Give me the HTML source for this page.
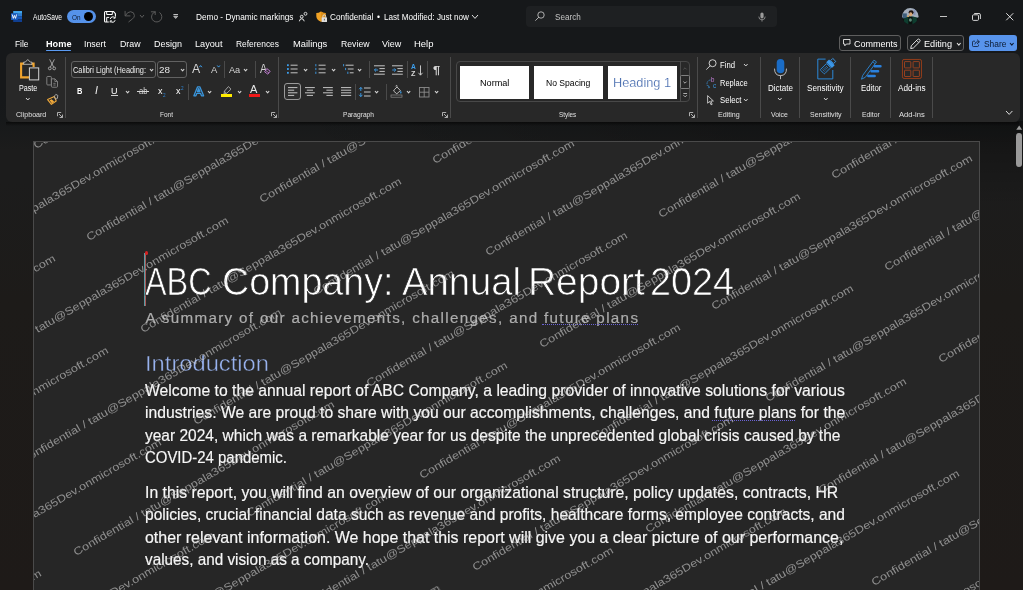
<!DOCTYPE html>
<html lang="en"><head><meta charset="utf-8"><title>Demo - Dynamic markings - Word</title>
<style>
html,body{margin:0;padding:0;background:#16181a;}
body{width:1023px;height:590px;position:relative;overflow:hidden;font-family:"Liberation Sans",sans-serif;}
#root{position:absolute;left:0;top:0;width:1023px;height:590px;overflow:hidden;will-change:transform;}
.a{position:absolute;box-sizing:border-box;}
.t{position:absolute;white-space:pre;line-height:1;transform-origin:0 0;font-family:"Liberation Sans",sans-serif;}
.bl{display:inline-block;width:0;height:0}
.wm{position:absolute;white-space:pre;line-height:1;transform-origin:0 100%;font-family:"Liberation Sans",sans-serif;}
svg{overflow:visible}
</style></head>
<body>
<div id="root">
<div class="a" style="left:0px;top:0px;width:1023px;height:125px;background:#16181a;"></div>
<div class="a" style="left:0px;top:100px;width:1023px;height:490px;background:linear-gradient(#16181a 0px,#17191a 21px,#1c1c1c 50px,#1c1c1c 80px,#1d1b19 200px,#1e1a18 490px);"></div>
<div class="a" style="left:0px;top:121px;width:1023px;height:90px;background:radial-gradient(ellipse 750px 85px at 100% 0,rgba(0,0,0,0.32),rgba(0,0,0,0));"></div>
<div class="a" style="left:6px;top:121.5px;width:1013px;height:4px;background:linear-gradient(rgba(8,8,8,0.85),rgba(8,8,8,0));"></div>
<div class="a" style="left:6px;top:53px;width:1013.5px;height:68.5px;background:#282828;border-radius:6px;"></div>
<svg class="a" style="left:11px;top:11px;" width="11" height="11" viewBox="0 0 11 11">
<rect x="2.2" y="0" width="8.8" height="2.8" fill="#41a5ee"/>
<rect x="2.2" y="2.8" width="8.8" height="2.7" fill="#2b7cd3"/>
<rect x="2.2" y="5.5" width="8.8" height="2.7" fill="#185abd"/>
<rect x="2.2" y="8.2" width="8.8" height="2.8" fill="#103f91"/>
<rect x="0" y="2.2" width="6.8" height="6.8" rx="0.6" fill="#185abd"/>
<path d="M1.3 3.8 L2.3 7.4 L3.4 4.4 L4.5 7.4 L5.5 3.8" fill="none" stroke="#fff" stroke-width="0.9" stroke-linejoin="round" stroke-linecap="round"/>
</svg>
<span class="t" id="t0" style="left:33px;top:14.01px;font-size:8.2px;color:#ffffff;transform:scaleX(0.8165);">AutoSave</span>
<div class="a" style="left:67px;top:10px;width:29px;height:13px;background:#5592ea;border-radius:6.5px;"></div>
<span class="t" id="t1" style="left:71.5px;top:14.01px;font-size:7.8px;color:#0c1a30;transform:scaleX(0.8168);">On</span>
<div class="a" style="left:84px;top:12px;width:9px;height:9px;background:#000;border-radius:4.5px;"></div>
<svg class="a" style="left:104px;top:10.8px;" width="12" height="11.5" viewBox="0 0 12 11.5">
<path d="M11.4 5.4 V2.7 L9.5 0.55 H1.6 Q0.55 0.55 0.55 1.6 V9.9 Q0.55 10.95 1.6 10.95 H4.8" fill="none" stroke="#fff" stroke-width="1.1"/>
<path d="M2.7 0.6 V3.5 H8.3 V0.6" fill="none" stroke="#fff" stroke-width="1"/>
<path d="M2.7 10.9 V6.4 H5.2" fill="none" stroke="#fff" stroke-width="1"/>
<path d="M6.3 8 A2.5 2.5 0 0 1 10.8 6.9 M11.1 9.2 A2.5 2.5 0 0 1 6.6 10.2" fill="none" stroke="#fff" stroke-width="1"/>
<path d="M11.2 5.4 V7.2 H9.4 M6.2 11.6 V9.9 H8" fill="none" stroke="#fff" stroke-width="0.9"/>
</svg>
<svg class="a" style="left:124px;top:11px;" width="11" height="11" viewBox="0 0 11 11"><path d="M1.1 0.3 V4.9 H6 M1.3 4.7 Q3.4 0.6 6.6 0.7 Q10.4 1 10.4 4.6 Q10.4 6.4 8.6 7.8 L4.8 10.8" fill="none" stroke="#5a5a5a" stroke-width="1" stroke-linecap="round" stroke-linejoin="round"/></svg>
<svg class="a" style="left:138.5px;top:14.3px;" width="6" height="4.4" viewBox="0 0 6 4.4"><path d="M1 1 L3.0 3.4 L5 1" fill="none" stroke="#5c5c5c" stroke-width="1" stroke-linejoin="round"/></svg>
<svg class="a" style="left:151px;top:11px;" width="11" height="11" viewBox="0 0 11 11"><path d="M0.3 0.8 H4.2 V3.6 M4.2 0.8 A5.2 5.2 0 1 0 8.8 1.6" fill="none" stroke="#5a5a5a" stroke-width="1" stroke-linecap="round" stroke-linejoin="round"/></svg>
<svg class="a" style="left:173px;top:14.2px;" width="5.4" height="5" viewBox="0 0 5.4 5"><path d="M0.4 0.6 H5" stroke="#d4d4d4" stroke-width="1"/><path d="M0.7 2.3 L2.7 4.5 L4.7 2.3 Z" fill="#9a9a9a" stroke="#d4d4d4" stroke-width="0.7" stroke-linejoin="round"/></svg>
<span class="t" id="t2" style="left:196px;top:13.00px;font-size:8.6px;color:#ffffff;transform:scaleX(0.9630);">Demo - Dynamic markings</span>
<svg class="a" style="left:299px;top:12px;" width="8" height="9.5" viewBox="0 0 8 9.5"><circle cx="2.7" cy="4.7" r="1.4" fill="none" stroke="#e8e8e8" stroke-width="1"/>
<path d="M0.4 9.3 Q0.5 6.8 2.7 6.8 Q4.9 6.8 5.2 9.3" fill="none" stroke="#e8e8e8" stroke-width="1"/><circle cx="6.5" cy="1.8" r="1.45" fill="none" stroke="#e8e8e8" stroke-width="0.9"/></svg>
<svg class="a" style="left:316px;top:11px;" width="12" height="12" viewBox="0 0 12 12"><path d="M4.9 0.4 Q7.2 1.9 9.6 2 V5.2 Q9.4 9 4.9 10.8 Q0.5 9 0.3 5.2 V2 Q2.6 1.9 4.9 0.4Z" fill="#f0a225"/>
<path d="M4.9 0.4 Q7.2 1.9 9.6 2 V5.2 Q9.4 9 4.9 10.8Z" fill="#dc8e18"/>
<rect x="5.6" y="6.2" width="5.4" height="4.8" rx="0.5" fill="#dedede"/>
<path d="M6.9 6.2 V5.2 A1.4 1.4 0 0 1 9.7 5.2 V6.2" fill="none" stroke="#dedede" stroke-width="0.9"/><rect x="7.9" y="7.8" width="0.9" height="1.6" fill="#555"/></svg>
<span class="t" id="t3" style="left:329.7px;top:13.00px;font-size:8.6px;color:#ffffff;transform:scaleX(0.9539);">Confidential</span>
<span class="t" id="t4" style="left:376.7px;top:13.00px;font-size:8.6px;color:#ffffff;transform:scaleX(0.9948);">•</span>
<span class="t" id="t5" style="left:383.5px;top:13.00px;font-size:8.6px;color:#ffffff;transform:scaleX(0.9464);">Last Modified: Just now</span>
<svg class="a" style="left:471px;top:14px;" width="8" height="5.4" viewBox="0 0 8 5.4"><path d="M1 1 L4.0 4.4 L7 1" fill="none" stroke="#e0e0e0" stroke-width="1" stroke-linejoin="round"/></svg>
<div class="a" style="left:526px;top:6px;width:251px;height:21px;background:#1e2022;border-radius:4px;"></div>
<svg class="a" style="left:535px;top:11px;" width="10" height="10" viewBox="0 0 10 10"><circle cx="6" cy="4" r="3.2" fill="none" stroke="#bdbdbd" stroke-width="0.9"/><path d="M3.7 6.3 L0.6 9.4" stroke="#bdbdbd" stroke-width="0.9" stroke-linecap="round"/></svg>
<span class="t" id="t6" style="left:554.5px;top:13.00px;font-size:8.6px;color:#c4c4c4;transform:scaleX(0.9473);">Search</span>
<svg class="a" style="left:758px;top:12px;" width="8" height="10" viewBox="0 0 8 10"><rect x="2.4" y="0.4" width="3.2" height="6" rx="1.6" fill="#9a9a9a"/><path d="M0.8 4.6 Q0.8 7.8 4 7.8 Q7.2 7.8 7.2 4.6 M4 7.8 V9.6" fill="none" stroke="#9a9a9a" stroke-width="0.8"/></svg>
<svg class="a" style="left:902px;top:8px;" width="17" height="17" viewBox="0 0 17 17"><defs><clipPath id="av"><circle cx="8.3" cy="8.2" r="8.2"/></clipPath></defs>
<g clip-path="url(#av)"><rect width="17" height="17" fill="#0c1512"/>
<rect x="0" y="0" width="17" height="9.6" fill="#a3adbb"/>
<rect x="0.6" y="5.4" width="4.2" height="5" fill="#3f5f7c"/>
<rect x="11.5" y="1" width="2" height="6" fill="#8793b8"/>
<path d="M1.5 17 L2.2 10.4 L6.4 8.4 H11 L14.6 9.6 L15.4 17Z" fill="#0e3d2f"/>
<rect x="6.4" y="8.8" width="4" height="8.2" fill="#0b100e"/>
<ellipse cx="9.1" cy="4.4" rx="2.5" ry="2.1" fill="#1c120e"/>
<ellipse cx="8.7" cy="6.3" rx="1.7" ry="2" fill="#d6a677"/>
<rect x="5.4" y="7.4" width="1.6" height="1.6" fill="#d8a25a"/>
<ellipse cx="8.4" cy="12" rx="1.5" ry="1.7" fill="#5d8a7a"/></g></svg>
<div class="a" style="left:940.3px;top:15.5px;width:7px;height:1px;background:#c4c4c4;"></div>
<svg class="a" style="left:972px;top:12.5px;" width="9" height="8" viewBox="0 0 9 8"><rect x="0.5" y="1.8" width="6" height="5.6" rx="1" fill="none" stroke="#e6e6e6" stroke-width="0.9"/><path d="M2.2 0.5 H7 Q8.4 0.5 8.4 1.9 V6" fill="none" stroke="#e6e6e6" stroke-width="0.9"/></svg>
<svg class="a" style="left:1005.5px;top:13px;" width="8" height="8" viewBox="0 0 8 8"><path d="M0.5 0.5 L7 7 M7 0.5 L0.5 7" stroke="#f0f0f0" stroke-width="0.9" stroke-linecap="round"/></svg>
<span class="t" id="t7" style="left:14.5px;top:40.00px;font-size:9.3px;color:#ffffff;transform:scaleX(0.9009);">File</span>
<span class="t" id="t8" style="left:45.5px;top:40.00px;font-size:9.3px;color:#ffffff;font-weight:700;transform:scaleX(0.9867);">Home</span>
<div class="a" style="left:45.5px;top:49.6px;width:25.5px;height:1.8px;background:#5b9bf3;border-radius:1px;"></div>
<span class="t" id="t9" style="left:84px;top:40.00px;font-size:9.3px;color:#ffffff;transform:scaleX(0.9456);">Insert</span>
<span class="t" id="t10" style="left:120px;top:40.00px;font-size:9.3px;color:#ffffff;transform:scaleX(0.9446);">Draw</span>
<span class="t" id="t11" style="left:153.5px;top:40.00px;font-size:9.3px;color:#ffffff;transform:scaleX(0.9671);">Design</span>
<span class="t" id="t12" style="left:194.5px;top:40.00px;font-size:9.3px;color:#ffffff;transform:scaleX(0.9849);">Layout</span>
<span class="t" id="t13" style="left:236px;top:40.00px;font-size:9.3px;color:#ffffff;transform:scaleX(0.9044);">References</span>
<span class="t" id="t14" style="left:293px;top:40.00px;font-size:9.3px;color:#ffffff;transform:scaleX(1.0056);">Mailings</span>
<span class="t" id="t15" style="left:340.5px;top:40.00px;font-size:9.3px;color:#ffffff;transform:scaleX(0.9349);">Review</span>
<span class="t" id="t16" style="left:381.7px;top:40.00px;font-size:9.3px;color:#ffffff;transform:scaleX(0.9658);">View</span>
<span class="t" id="t17" style="left:413.5px;top:40.00px;font-size:9.3px;color:#ffffff;transform:scaleX(1.0196);">Help</span>
<div class="a" style="left:839px;top:35.2px;width:62px;height:15.8px;background:#1d1f21;border:1px solid #5e5e5e;border-radius:3px;"></div>
<svg class="a" style="left:842.9px;top:39.3px;" width="7.5" height="7.5" viewBox="0 0 7.5 7.5"><path d="M0.5 0.5 H7 V5 H3.4 L1.8 6.8 V5 H0.5Z" fill="none" stroke="#fff" stroke-width="0.8" stroke-linejoin="round"/></svg>
<span class="t" id="t18" style="left:853.6px;top:40.01px;font-size:9.0px;color:#ffffff;transform:scaleX(1.0019);">Comments</span>
<div class="a" style="left:907px;top:35.2px;width:56.8px;height:15.8px;background:#1d1f21;border:1px solid #5e5e5e;border-radius:3px;"></div>
<svg class="a" style="left:909.8px;top:37.6px;" width="11" height="11.4" viewBox="0 0 11 11"><path d="M7.6 1.2 Q8.6 0.4 9.6 1.4 Q10.6 2.4 9.8 3.4 L3.4 9.8 L0.7 10.4 L1.3 7.6 Z M6.6 2.2 L8.8 4.4" fill="none" stroke="#fff" stroke-width="0.85" stroke-linejoin="round"/></svg>
<span class="t" id="t19" style="left:924.2px;top:40.01px;font-size:9.0px;color:#ffffff;transform:scaleX(1.0170);">Editing</span>
<svg class="a" style="left:955.8px;top:41.5px;" width="5.6" height="4.1" viewBox="0 0 5.6 4.1"><path d="M1 1 L2.8 3.1 L4.6 1" fill="none" stroke="#e0e0e0" stroke-width="1.1" stroke-linejoin="round"/></svg>
<div class="a" style="left:969px;top:35.2px;width:48px;height:15.8px;background:#5894ec;border-radius:3px;"></div>
<svg class="a" style="left:972.2px;top:39.2px;" width="8" height="8" viewBox="0 0 8 8"><path d="M3 2.2 H1.4 Q0.5 2.2 0.5 3.1 V6.6 Q0.5 7.5 1.4 7.5 H5.6 Q6.5 7.5 6.5 6.6 V5.6" fill="none" stroke="#0c1a30" stroke-width="0.8"/><path d="M5 0.6 L7.4 2.8 L5 5 M7.2 2.8 H5.4 Q3.2 2.8 2.8 5.4" fill="none" stroke="#0c1a30" stroke-width="0.8" stroke-linejoin="round"/></svg>
<span class="t" id="t20" style="left:983.6px;top:40.01px;font-size:9.0px;color:#0c1a30;transform:scaleX(0.9321);">Share</span>
<svg class="a" style="left:1009.2px;top:41.5px;" width="5.6" height="4.1" viewBox="0 0 5.6 4.1"><path d="M1 1 L2.8 3.1 L4.6 1" fill="none" stroke="#0c1a30" stroke-width="1.1" stroke-linejoin="round"/></svg>
<svg class="a" style="left:20px;top:59px;" width="19.5" height="21.5" viewBox="0 0 19.5 21.5">
<path d="M4 4.6 H1.1 V18.4 H9 M11 4.6 H13.6 V8" fill="none" stroke="#f0a42e" stroke-width="2.1"/>
<path d="M3.7 5.3 V3.1 H5.3 L7.8 0.5 L10.3 3.1 H11.9 V5.3 Z" fill="#282828" stroke="#cfcfcf" stroke-width="0.8" stroke-linejoin="round"/>
<rect x="9.4" y="8.9" width="9.3" height="12" fill="#2a2a2a" stroke="#d4d4d4" stroke-width="1"/>
</svg>
<span class="t" id="t21" style="left:18.8px;top:84.02px;font-size:8.3px;color:#ffffff;transform:scaleX(0.8624);">Paste</span>
<svg class="a" style="left:25px;top:96.8px;" width="5.6" height="4" viewBox="0 0 5.6 4"><path d="M1 1 L2.8 3 L4.6 1" fill="none" stroke="#d6d6d6" stroke-width="1" stroke-linejoin="round"/></svg>
<svg class="a" style="left:48px;top:59px;" width="8" height="11.5" viewBox="0 0 8 11.5"><path d="M1.6 0.3 L5.6 8 M6.4 0.3 L2.4 8" stroke="#bdbdbd" stroke-width="0.8" fill="none"/>
<circle cx="1.8" cy="9.4" r="1.4" fill="none" stroke="#bdbdbd" stroke-width="0.8"/><circle cx="6.2" cy="9.4" r="1.4" fill="none" stroke="#bdbdbd" stroke-width="0.8"/></svg>
<svg class="a" style="left:46px;top:76px;" width="12.5" height="11.8" viewBox="0 0 12.5 12.5"><path d="M0.5 8.6 V1.4 Q0.5 0.5 1.4 0.5 H4.4 Q5.3 0.5 5.3 1.4 V8.6 Q5.3 9.5 4.4 9.5 H1.4 Q0.5 9.5 0.5 8.6Z" fill="none" stroke="#8f8f8f" stroke-width="0.9"/>
<path d="M5.4 3 H9 L11.8 5.8 V11 Q11.8 11.9 10.9 11.9 H6.3 Q5.4 11.9 5.4 11 Z" fill="#282828" stroke="#8f8f8f" stroke-width="0.9"/>
<path d="M9 3 V5.8 H11.8 M7.4 7.8 H9.8 M7.4 9.6 H9.8" fill="none" stroke="#8f8f8f" stroke-width="0.8"/></svg>
<svg class="a" style="left:46.5px;top:94px;" width="12" height="11" viewBox="0 0 12 11"><path d="M0.6 5.6 L7.4 2.6 L9.2 7 L4.4 10.4 Z" fill="none" stroke="#f0a93a" stroke-width="1.1" stroke-linejoin="round"/>
<path d="M2.6 6.2 L5 9.4 L7.2 7.6 L4.6 5.2Z" fill="#f0a93a"/>
<path d="M7.2 2.4 L8.8 0.4 L10.8 1.4 L10.4 4.4 L8.6 5.2Z" fill="none" stroke="#bdbdbd" stroke-width="0.8" stroke-linejoin="round"/></svg>
<span class="t" id="t22" style="left:16px;top:111.00px;font-size:7.9px;color:#e0e0e0;transform:scaleX(0.8969);">Clipboard</span>
<svg class="a" style="left:57px;top:112px;" width="6" height="6" viewBox="0 0 6 6"><path d="M0.5 4.2 V0.5 H4.2" fill="none" stroke="#bdbdbd" stroke-width="0.9"/><path d="M2 2 L5.4 5.4 M5.5 2.6 V5.5 H2.6" fill="none" stroke="#bdbdbd" stroke-width="0.9"/></svg>
<div class="a" style="left:65px;top:57px;width:1px;height:61px;background:#4a4a4a;"></div>
<div class="a" style="left:71px;top:61px;width:84.5px;height:17px;background:#282828;border:1px solid #626262;border-radius:3px;"></div>
<span class="t" id="t23" style="left:73px;top:66.01px;font-size:8.3px;color:#ececec;transform:scaleX(0.8892);">Calibri Light (Heading:</span>
<svg class="a" style="left:148.7px;top:67.6px;" width="5.2" height="3.9" viewBox="0 0 5.2 3.9"><path d="M1 1 L2.6 2.9 L4.2 1" fill="none" stroke="#d6d6d6" stroke-width="1.1" stroke-linejoin="round"/></svg>
<div class="a" style="left:157px;top:61px;width:29.5px;height:17px;background:#282828;border:1px solid #626262;border-radius:3px;"></div>
<span class="t" id="t24" style="left:159px;top:66.01px;font-size:8.3px;color:#e4e4e4;transform:scaleX(1.1912);">28</span>
<svg class="a" style="left:179.9px;top:67.6px;" width="5.2" height="3.9" viewBox="0 0 5.2 3.9"><path d="M1 1 L2.6 2.9 L4.2 1" fill="none" stroke="#d6d6d6" stroke-width="1.1" stroke-linejoin="round"/></svg>
<span class="t" id="t25" style="left:191.8px;top:63.00px;font-size:12.4px;color:#d4d4d4;transform:scaleX(0.9921);">A</span>
<svg class="a" style="left:199.1px;top:64.6px;" width="3.2" height="2.6" viewBox="0 0 3.2 2.6"><path d="M0.3 2.2 L1.6 0.6 L2.9 2.2" fill="none" stroke="#3da0ee" stroke-width="1"/></svg>
<span class="t" id="t26" style="left:210.8px;top:65.01px;font-size:9.6px;color:#d4d4d4;transform:scaleX(0.9834);">A</span>
<svg class="a" style="left:217px;top:64.8px;" width="3.2" height="2.6" viewBox="0 0 3.2 2.6"><path d="M0.3 0.5 L1.6 2.1 L2.9 0.5" fill="none" stroke="#3da0ee" stroke-width="1"/></svg>
<div class="a" style="left:224px;top:61px;width:1px;height:17px;background:#4a4a4a;"></div>
<span class="t" id="t27" style="left:229.2px;top:65.02px;font-size:9.8px;color:#d4d4d4;transform:scaleX(0.9346);">Aa</span>
<svg class="a" style="left:243.2px;top:67.6px;" width="5.2" height="3.9" viewBox="0 0 5.2 3.9"><path d="M1 1 L2.6 2.9 L4.2 1" fill="none" stroke="#d6d6d6" stroke-width="1.1" stroke-linejoin="round"/></svg>
<div class="a" style="left:255px;top:61px;width:1px;height:17px;background:#4a4a4a;"></div>
<span class="t" id="t28" style="left:259.6px;top:63.01px;font-size:12.8px;color:#d4d4d4;transform:scaleX(0.8190);">A</span>
<svg class="a" style="left:264.3px;top:68.4px;" width="7" height="7" viewBox="0 0 7 7"><path d="M2.8 0.6 L6.2 3.2 L3.8 6.2 L0.6 3.8Z" fill="#282828" stroke="#c47fd6" stroke-width="0.9" stroke-linejoin="round"/><path d="M1.6 2.4 L5 5" stroke="#c47fd6" stroke-width="0.8"/></svg>
<span class="t" id="t29" style="left:76.8px;top:86.01px;font-size:9.8px;color:#ffffff;font-weight:700;transform:scaleX(0.7629);">B</span>
<span class="t" id="t30" style="left:95px;top:85.01px;font-size:10.6px;color:#f0f0f0;font-style:italic;font-family:"Liberation Serif",serif;transform:scaleX(1.5577);">I</span>
<span class="t" id="t31" style="left:111px;top:87.01px;font-size:8.8px;color:#ffffff;transform:scaleX(1.0221);">U</span>
<div class="a" style="left:111px;top:95.2px;width:6.5px;height:0.8px;background:#cfcfcf;"></div>
<svg class="a" style="left:125.2px;top:90.2px;" width="5.2" height="3.9" viewBox="0 0 5.2 3.9"><path d="M1 1 L2.6 2.9 L4.2 1" fill="none" stroke="#d6d6d6" stroke-width="1.1" stroke-linejoin="round"/></svg>
<span class="t" id="t32" style="left:138.5px;top:87.01px;font-size:8.4px;color:#d6d6d6;transform:scaleX(0.9112);">ab</span>
<div class="a" style="left:137px;top:91.4px;width:11.5px;height:0.8px;background:#d6d6d6;"></div>
<span class="t" id="t33" style="left:158px;top:87.00px;font-size:9px;color:#ffffff;transform:scaleX(1.0000);">x</span>
<span class="t" id="t34" style="left:163.2px;top:94.01px;font-size:4.9px;color:#2f86d6;transform:scaleX(0.9509);">2</span>
<span class="t" id="t35" style="left:176px;top:87.00px;font-size:9px;color:#ffffff;transform:scaleX(1.0000);">x</span>
<span class="t" id="t36" style="left:181px;top:87.01px;font-size:4.9px;color:#2f86d6;transform:scaleX(0.9509);">2</span>
<div class="a" style="left:188px;top:84px;width:1px;height:15.5px;background:#4a4a4a;"></div>
<svg class="a" style="left:192.5px;top:86px;" width="11.5" height="10.5" viewBox="0 0 11.5 10.5"><path d="M0.9 9.8 L4.6 0.8 H6.8 L10.6 9.8 H8.5 L7.6 7.4 H3.8 L2.9 9.8Z M4.5 5.6 H6.9 L5.7 2.6Z" fill="none" stroke="#3a96dd" stroke-width="1.3" stroke-linejoin="round"/></svg>
<svg class="a" style="left:206.9px;top:90.2px;" width="5.2" height="3.9" viewBox="0 0 5.2 3.9"><path d="M1 1 L2.6 2.9 L4.2 1" fill="none" stroke="#d6d6d6" stroke-width="1.1" stroke-linejoin="round"/></svg>
<svg class="a" style="left:222px;top:85.5px;" width="10" height="9" viewBox="0 0 10 9"><path d="M6.4 0.6 L9 3.2 L4.6 7.4 L2.2 7.8 L2.4 5.2Z M2.4 5.2 L4.6 7.4" fill="none" stroke="#b4b4b4" stroke-width="0.85" stroke-linejoin="round"/><path d="M1.6 7.4 L0.6 8.6 H2.6Z" fill="#b4b4b4"/></svg>
<div class="a" style="left:221px;top:94.2px;width:11px;height:2.9px;background:#ffeb00;"></div>
<svg class="a" style="left:236.9px;top:90.2px;" width="5.2" height="3.9" viewBox="0 0 5.2 3.9"><path d="M1 1 L2.6 2.9 L4.2 1" fill="none" stroke="#d6d6d6" stroke-width="1.1" stroke-linejoin="round"/></svg>
<span class="t" id="t37" style="left:250.4px;top:85.01px;font-size:10.4px;color:#e8e8e8;transform:scaleX(1.0667);">A</span>
<div class="a" style="left:248.5px;top:94.2px;width:11.5px;height:2.9px;background:#f01818;"></div>
<svg class="a" style="left:265.4px;top:90.2px;" width="5.2" height="3.9" viewBox="0 0 5.2 3.9"><path d="M1 1 L2.6 2.9 L4.2 1" fill="none" stroke="#d6d6d6" stroke-width="1.1" stroke-linejoin="round"/></svg>
<span class="t" id="t38" style="left:160px;top:111.00px;font-size:7.9px;color:#e0e0e0;transform:scaleX(0.8229);">Font</span>
<svg class="a" style="left:270.5px;top:112px;" width="6" height="6" viewBox="0 0 6 6"><path d="M0.5 4.2 V0.5 H4.2" fill="none" stroke="#bdbdbd" stroke-width="0.9"/><path d="M2 2 L5.4 5.4 M5.5 2.6 V5.5 H2.6" fill="none" stroke="#bdbdbd" stroke-width="0.9"/></svg>
<div class="a" style="left:278px;top:57px;width:1px;height:61px;background:#4a4a4a;"></div>
<svg class="a" style="left:286.5px;top:64px;" width="11" height="10" viewBox="0 0 11 10"><rect x="0" y="0.29999999999999993" width="1.8" height="1.8" fill="#3da0ee"/><path d="M3.6 1.2 H10.6" stroke="#d6d6d6" stroke-width="0.9"/><rect x="0" y="4.1" width="1.8" height="1.8" fill="#3da0ee"/><path d="M3.6 5 H10.6" stroke="#d6d6d6" stroke-width="0.9"/><rect x="0" y="7.9" width="1.8" height="1.8" fill="#3da0ee"/><path d="M3.6 8.8 H10.6" stroke="#d6d6d6" stroke-width="0.9"/></svg>
<svg class="a" style="left:302.8px;top:67.6px;" width="5.2" height="3.9" viewBox="0 0 5.2 3.9"><path d="M1 1 L2.6 2.9 L4.2 1" fill="none" stroke="#d6d6d6" stroke-width="1.1" stroke-linejoin="round"/></svg>
<svg class="a" style="left:315px;top:64px;" width="11" height="10" viewBox="0 0 11 10"><rect x="0.4" y="0.09999999999999987" width="0.9" height="2.2" fill="#3da0ee"/><path d="M3.6 1.2 H10.6" stroke="#d6d6d6" stroke-width="0.9"/><rect x="0.4" y="3.9" width="0.9" height="2.2" fill="#3da0ee"/><path d="M3.6 5 H10.6" stroke="#d6d6d6" stroke-width="0.9"/><rect x="0.4" y="7.700000000000001" width="0.9" height="2.2" fill="#3da0ee"/><path d="M3.6 8.8 H10.6" stroke="#d6d6d6" stroke-width="0.9"/></svg>
<svg class="a" style="left:330.8px;top:67.6px;" width="5.2" height="3.9" viewBox="0 0 5.2 3.9"><path d="M1 1 L2.6 2.9 L4.2 1" fill="none" stroke="#d6d6d6" stroke-width="1.1" stroke-linejoin="round"/></svg>
<svg class="a" style="left:343px;top:64px;" width="11" height="10" viewBox="0 0 11 10"><rect x="0.2" y="0.1" width="0.9" height="2.2" fill="#3da0ee"/><path d="M2.6 1.2 H10.6" stroke="#d6d6d6" stroke-width="0.9"/><rect x="2.2" y="3.9" width="0.9" height="2.2" fill="#3da0ee"/><path d="M4.8 5 H10.6" stroke="#d6d6d6" stroke-width="0.9"/><rect x="4.4" y="7.7" width="0.9" height="2.2" fill="#3da0ee"/><path d="M6.8 8.8 H10.6" stroke="#d6d6d6" stroke-width="0.9"/></svg>
<svg class="a" style="left:357.4px;top:67.6px;" width="5.2" height="3.9" viewBox="0 0 5.2 3.9"><path d="M1 1 L2.6 2.9 L4.2 1" fill="none" stroke="#d6d6d6" stroke-width="1.1" stroke-linejoin="round"/></svg>
<div class="a" style="left:369px;top:61px;width:1px;height:17px;background:#4a4a4a;"></div>
<svg class="a" style="left:374px;top:64.5px;" width="11" height="10" viewBox="0 0 11 10"><path d="M0 0.8 H10.8 M5.4 3.6 H10.8 M5.4 6.4 H10.8 M0 9.2 H10.8" stroke="#d6d6d6" stroke-width="0.9"/><path d="M4 5 H0.6 M2 3.4 L0.4 5 L2 6.6" fill="none" stroke="#3da0ee" stroke-width="0.9"/></svg>
<svg class="a" style="left:391.5px;top:64.5px;" width="11" height="10" viewBox="0 0 11 10"><path d="M0 0.8 H10.8 M5.4 3.6 H10.8 M5.4 6.4 H10.8 M0 9.2 H10.8" stroke="#d6d6d6" stroke-width="0.9"/><path d="M0.2 5 H3.6 M2.2 3.4 L3.8 5 L2.2 6.6" fill="none" stroke="#3da0ee" stroke-width="0.9"/></svg>
<div class="a" style="left:407px;top:61px;width:1px;height:17px;background:#4a4a4a;"></div>
<span class="t" id="t39" style="left:411.2px;top:64.02px;font-size:6.6px;color:#3da0ee;font-weight:700;transform:scaleX(1.0072);">A</span>
<span class="t" id="t40" style="left:411.4px;top:71.01px;font-size:6.6px;color:#d6d6d6;font-weight:700;transform:scaleX(1.0915);">Z</span>
<svg class="a" style="left:417.5px;top:64.5px;" width="5" height="11" viewBox="0 0 5 11"><path d="M2.5 0.4 V10 M0.5 7.8 L2.5 10.2 L4.5 7.8" fill="none" stroke="#d6d6d6" stroke-width="0.9"/></svg>
<div class="a" style="left:427px;top:61px;width:1px;height:17px;background:#4a4a4a;"></div>
<span class="t" id="t41" style="left:433.2px;top:65.01px;font-size:11px;color:#d6d6d6;font-weight:700;transform:scaleX(1.1755);">¶</span>
<div class="a" style="left:284px;top:83px;width:17px;height:17px;background:#2e2e2e;border:1px solid #9a9a9a;border-radius:3px;"></div>
<svg class="a" style="left:288px;top:87px;" width="10" height="9" viewBox="0 0 10 9"><path d="M0 0.6 H9.4 M0 3.2 H6.2 M0 5.8 H9.4 M0 8.4 H6.2" stroke="#d6d6d6" stroke-width="0.9"/></svg>
<svg class="a" style="left:305px;top:87px;" width="10" height="9" viewBox="0 0 10 9"><path d="M0 0.6 H9.8 M1.8 3.2 H8 M0 5.8 H9.8 M1.8 8.4 H8" stroke="#d6d6d6" stroke-width="0.9"/></svg>
<svg class="a" style="left:323px;top:87px;" width="10" height="9" viewBox="0 0 10 9"><path d="M0 0.6 H9.8 M3.4 3.2 H9.8 M0 5.8 H9.8 M3.4 8.4 H9.8" stroke="#d6d6d6" stroke-width="0.9"/></svg>
<svg class="a" style="left:340.6px;top:87px;" width="10.4" height="9" viewBox="0 0 10.4 9"><path d="M0 0.6 H10.2 M0 3.2 H10.2 M0 5.8 H10.2 M0 8.4 H10.2" stroke="#d6d6d6" stroke-width="0.9"/></svg>
<div class="a" style="left:355px;top:84px;width:1px;height:15.5px;background:#4a4a4a;"></div>
<svg class="a" style="left:359px;top:86.5px;" width="12" height="10" viewBox="0 0 12 10"><path d="M5 1 H11.6 M5 5 H11.6 M5 9 H11.6" stroke="#d6d6d6" stroke-width="0.9"/><path d="M1.8 0.4 V4 M1.8 6 V9.6 M0.2 2.2 L1.8 0.4 L3.4 2.2 M0.2 7.8 L1.8 9.6 L3.4 7.8" fill="none" stroke="#3da0ee" stroke-width="0.9"/></svg>
<svg class="a" style="left:374.4px;top:90.2px;" width="5.2" height="3.9" viewBox="0 0 5.2 3.9"><path d="M1 1 L2.6 2.9 L4.2 1" fill="none" stroke="#d6d6d6" stroke-width="1.1" stroke-linejoin="round"/></svg>
<div class="a" style="left:386px;top:84px;width:1px;height:15.5px;background:#4a4a4a;"></div>
<svg class="a" style="left:391px;top:85.5px;" width="11" height="11.5" viewBox="0 0 11 11.5"><path d="M3.4 3.6 L6 1 L9.4 4.6 L5.8 7.8 L2.6 5 Z" fill="none" stroke="#d6d6d6" stroke-width="0.85" stroke-linejoin="round"/><path d="M6 1 V-0.2 Q6 -1 5 -0.4 L4.4 0.4" fill="none" stroke="#d6d6d6" stroke-width="0.7"/><path d="M9.8 4.6 Q11.4 7.2 9.8 7.8 Q8.4 7.2 9.8 4.6Z" fill="#3a96dd"/><rect x="0" y="9" width="11" height="2.2" fill="none" stroke="#8a8a8a" stroke-width="0.7"/></svg>
<svg class="a" style="left:406.4px;top:90.2px;" width="5.2" height="3.9" viewBox="0 0 5.2 3.9"><path d="M1 1 L2.6 2.9 L4.2 1" fill="none" stroke="#d6d6d6" stroke-width="1.1" stroke-linejoin="round"/></svg>
<svg class="a" style="left:418.5px;top:86.5px;" width="10.5" height="10.5" viewBox="0 0 10.5 10.5"><rect x="0.5" y="0.5" width="9.5" height="9.5" fill="none" stroke="#8c8c8c" stroke-width="0.9"/><path d="M5.2 0.5 V10 M0.5 5.2 H10" stroke="#8c8c8c" stroke-width="0.9"/></svg>
<svg class="a" style="left:434.4px;top:90.2px;" width="5.2" height="3.9" viewBox="0 0 5.2 3.9"><path d="M1 1 L2.6 2.9 L4.2 1" fill="none" stroke="#d6d6d6" stroke-width="1.1" stroke-linejoin="round"/></svg>
<span class="t" id="t42" style="left:343px;top:111.00px;font-size:7.9px;color:#e0e0e0;transform:scaleX(0.8410);">Paragraph</span>
<svg class="a" style="left:442px;top:112px;" width="6" height="6" viewBox="0 0 6 6"><path d="M0.5 4.2 V0.5 H4.2" fill="none" stroke="#bdbdbd" stroke-width="0.9"/><path d="M2 2 L5.4 5.4 M5.5 2.6 V5.5 H2.6" fill="none" stroke="#bdbdbd" stroke-width="0.9"/></svg>
<div class="a" style="left:450px;top:57px;width:1px;height:61px;background:#4a4a4a;"></div>
<div class="a" style="left:455.8px;top:61.3px;width:234.2px;height:41.2px;border:1px solid #484848;border-radius:4px;"></div>
<div class="a" style="left:460.4px;top:65.6px;width:68.8px;height:33px;background:#fff;"></div>
<div class="a" style="left:534px;top:65.6px;width:68.7px;height:33px;background:#fff;"></div>
<div class="a" style="left:607.8px;top:65.6px;width:69px;height:33px;background:#fff;"></div>
<span class="t" id="t43" style="left:480px;top:79.01px;font-size:9.0px;color:#000;transform:scaleX(1.0132);">Normal</span>
<span class="t" id="t44" style="left:546px;top:79.01px;font-size:9.0px;color:#000;transform:scaleX(0.9542);">No Spacing</span>
<span class="t" id="t45" style="left:613px;top:76.00px;font-size:13.4px;color:#4268ad;-webkit-text-stroke:0.2px #fff;transform:scaleX(0.9498);">Heading 1</span>
<div class="a" style="left:680px;top:61.4px;width:1px;height:40.6px;background:#4c4c4c;"></div>
<div class="a" style="left:680px;top:88.4px;width:10px;height:1px;background:#4c4c4c;"></div>
<div class="a" style="left:680.3px;top:75.4px;width:9.6px;height:13.6px;border:1px solid #808080;border-radius:1.5px;"></div>
<svg class="a" style="left:683px;top:66.5px;" width="4" height="3" viewBox="0 0 4 3"><path d="M0.4 2.4 L2 0.8 L3.6 2.4" fill="none" stroke="#5a5a5a" stroke-width="0.8"/></svg>
<svg class="a" style="left:683px;top:80.5px;" width="4" height="3" viewBox="0 0 4 3"><path d="M0.4 0.6 L2 2.2 L3.6 0.6" fill="none" stroke="#d0d0d0" stroke-width="0.8"/></svg>
<svg class="a" style="left:683px;top:92.6px;" width="4.4" height="5" viewBox="0 0 4.4 5"><path d="M0.3 0.5 H4.1" stroke="#d0d0d0" stroke-width="0.8"/><path d="M0.5 2.2 L2.2 3.9 L3.9 2.2" fill="none" stroke="#d0d0d0" stroke-width="0.8"/></svg>
<span class="t" id="t46" style="left:559.4px;top:111.00px;font-size:7.9px;color:#e0e0e0;transform:scaleX(0.8047);">Styles</span>
<svg class="a" style="left:689.3px;top:112px;" width="6" height="6" viewBox="0 0 6 6"><path d="M0.5 4.2 V0.5 H4.2" fill="none" stroke="#bdbdbd" stroke-width="0.9"/><path d="M2 2 L5.4 5.4 M5.5 2.6 V5.5 H2.6" fill="none" stroke="#bdbdbd" stroke-width="0.9"/></svg>
<div class="a" style="left:697px;top:57px;width:1px;height:61px;background:#4a4a4a;"></div>
<svg class="a" style="left:706px;top:59px;" width="11" height="11" viewBox="0 0 11 11"><circle cx="6.6" cy="4.2" r="3.5" fill="none" stroke="#e0e0e0" stroke-width="0.9"/><path d="M4.1 6.8 L0.6 10.3" stroke="#e0e0e0" stroke-width="0.9" stroke-linecap="round"/></svg>
<span class="t" id="t47" style="left:720px;top:61.01px;font-size:8.3px;color:#ffffff;transform:scaleX(0.9293);">Find</span>
<svg class="a" style="left:743px;top:62.6px;" width="5.6" height="4" viewBox="0 0 5.6 4"><path d="M1 1 L2.8 3 L4.6 1" fill="none" stroke="#d6d6d6" stroke-width="1" stroke-linejoin="round"/></svg>
<span class="t" id="t48" style="left:711px;top:77.01px;font-size:6.6px;color:#c47fd6;transform:scaleX(0.9260);">b</span>
<span class="t" id="t49" style="left:712.6px;top:83.01px;font-size:6.6px;color:#3a96dd;transform:scaleX(0.9706);">c</span>
<svg class="a" style="left:705.5px;top:78.5px;" width="6" height="9" viewBox="0 0 6 9"><path d="M4.6 1 Q1 1.4 1 5 Q1 7.4 3.4 8.2 M2.2 6.4 L3.6 8.3 L1.6 9" fill="none" stroke="#3a96dd" stroke-width="0.8" stroke-dasharray="1.4 0.8"/></svg>
<span class="t" id="t50" style="left:720px;top:79.02px;font-size:8.3px;color:#ffffff;transform:scaleX(0.9063);">Replace</span>
<svg class="a" style="left:707px;top:95px;" width="8" height="10.5" viewBox="0 0 8 10.5"><path d="M0.6 0.6 V8.2 L2.6 6.4 L4 9.8 L5.2 9.3 L3.8 6 H6.4Z" fill="none" stroke="#e0e0e0" stroke-width="0.8" stroke-linejoin="round"/></svg>
<span class="t" id="t51" style="left:720px;top:96.01px;font-size:8.3px;color:#ffffff;transform:scaleX(0.9279);">Select</span>
<svg class="a" style="left:743px;top:98px;" width="5.6" height="4" viewBox="0 0 5.6 4"><path d="M1 1 L2.8 3 L4.6 1" fill="none" stroke="#d6d6d6" stroke-width="1" stroke-linejoin="round"/></svg>
<span class="t" id="t52" style="left:717.7px;top:111.00px;font-size:7.9px;color:#e0e0e0;transform:scaleX(0.9030);">Editing</span>
<div class="a" style="left:760px;top:57px;width:1px;height:61px;background:#4a4a4a;"></div>
<svg class="a" style="left:774px;top:58.8px;" width="13" height="20.5" viewBox="0 0 13 20.5"><rect x="2.7" y="0" width="7.6" height="14.2" rx="3.8" fill="#1a6cc6"/><path d="M0.5 9.6 Q0.5 16.6 6.5 16.6 Q12.5 16.6 12.5 9.6 M6.5 16.6 V20.2" fill="none" stroke="#c8c8c8" stroke-width="0.9"/></svg>
<span class="t" id="t53" style="left:767.5px;top:84.02px;font-size:8.3px;color:#ffffff;transform:scaleX(0.9679);">Dictate</span>
<svg class="a" style="left:777px;top:96.6px;" width="5.6" height="4" viewBox="0 0 5.6 4"><path d="M1 1 L2.8 3 L4.6 1" fill="none" stroke="#d6d6d6" stroke-width="1" stroke-linejoin="round"/></svg>
<span class="t" id="t54" style="left:771.4px;top:111.00px;font-size:7.9px;color:#e0e0e0;transform:scaleX(0.8751);">Voice</span>
<div class="a" style="left:799px;top:57px;width:1px;height:61px;background:#4a4a4a;"></div>
<svg class="a" style="left:817px;top:57px;" width="20" height="23" viewBox="0 0 20 23"><path d="M8.6 2.1 H0.8 V21.9 H15.8 V13" fill="none" stroke="#2b88d8" stroke-width="1"/><g transform="translate(11.2 9) rotate(-45)"><rect x="-8.4" y="-3" width="9" height="6" rx="0.8" fill="#282828" stroke="#2b88d8" stroke-width="0.9"/><path d="M-6.4 -1.6 V1.6 M-4.8 -1.6 V1.6 M-3.2 -1.6 V1.6 M-1.6 -1.6 V1.6" stroke="#2b88d8" stroke-width="0.7"/><rect x="1.2" y="-4" width="4" height="8" fill="#3a96e8"/><rect x="5.6" y="-2.1" width="3" height="4.2" fill="#282828" stroke="#3a96e8" stroke-width="0.9"/></g></svg>
<span class="t" id="t55" style="left:807px;top:84.02px;font-size:8.3px;color:#ffffff;transform:scaleX(0.9797);">Sensitivity</span>
<svg class="a" style="left:822.7px;top:96.6px;" width="5.6" height="4" viewBox="0 0 5.6 4"><path d="M1 1 L2.8 3 L4.6 1" fill="none" stroke="#d6d6d6" stroke-width="1" stroke-linejoin="round"/></svg>
<span class="t" id="t56" style="left:809.8px;top:111.00px;font-size:7.9px;color:#e0e0e0;transform:scaleX(0.8894);">Sensitivity</span>
<div class="a" style="left:850px;top:57px;width:1px;height:61px;background:#4a4a4a;"></div>
<svg class="a" style="left:860.5px;top:58.5px;" width="21" height="21" viewBox="0 0 21 21"><path d="M0.5 20.2 L1.7 16.4 L12.9 1.2 L15.5 2.9 L4.3 18.3 Z" fill="none" stroke="#2b88d8" stroke-width="0.9" stroke-linejoin="round"/><path d="M11.6 3 L14.2 4.7" stroke="#2b88d8" stroke-width="0.8"/><path d="M13.8 7.2 H19.4 M10.6 12.2 H17 M7.4 17 H13.6" stroke="#2a80dc" stroke-width="2.6" stroke-linecap="round"/></svg>
<span class="t" id="t57" style="left:860.6px;top:84.02px;font-size:8.3px;color:#ffffff;transform:scaleX(0.9406);">Editor</span>
<span class="t" id="t58" style="left:862px;top:111.00px;font-size:7.9px;color:#e0e0e0;transform:scaleX(0.8630);">Editor</span>
<div class="a" style="left:890px;top:57px;width:1px;height:61px;background:#4a4a4a;"></div>
<svg class="a" style="left:902px;top:59px;" width="20" height="20" viewBox="0 0 20 20"><rect x="2.5" y="2.6" width="6.3" height="6.3" rx="0.5" fill="none" stroke="#a8461f" stroke-width="0.85"/><rect x="2.5" y="11.2" width="6.3" height="6.3" rx="0.5" fill="none" stroke="#a8461f" stroke-width="0.85"/><rect x="11.1" y="2.6" width="6.3" height="6.3" rx="0.5" fill="none" stroke="#a8461f" stroke-width="0.85"/><rect x="11.1" y="11.2" width="6.3" height="6.3" rx="0.5" fill="none" stroke="#a8461f" stroke-width="0.85"/><rect x="0.45" y="0.45" width="19" height="19" rx="1.6" fill="none" stroke="#a04018" stroke-width="0.9"/></svg>
<span class="t" id="t59" style="left:898.3px;top:84.02px;font-size:8.3px;color:#ffffff;transform:scaleX(0.9843);">Add-ins</span>
<span class="t" id="t60" style="left:899.3px;top:111.00px;font-size:7.9px;color:#e0e0e0;transform:scaleX(0.9602);">Add-ins</span>
<div class="a" style="left:932px;top:57px;width:1px;height:61px;background:#4a4a4a;"></div>
<svg class="a" style="left:1005.4px;top:109.9px;" width="8.4" height="5.4" viewBox="0 0 8.4 5.4"><path d="M1 1 L4.2 4.4 L7.4 1" fill="none" stroke="#e0e0e0" stroke-width="1" stroke-linejoin="round"/></svg>
<div class="a" id="page" style="left:33px;top:141px;width:947px;height:451px;background:#262626;border:1px solid #4a4a4a;overflow:hidden"></div>
<div class="a" style="left:144.2px;top:253px;width:1px;height:53px;background:#5a9aa2;"></div>
<div class="a" style="left:145.2px;top:253px;width:0.8px;height:53px;background:#a85a5a;"></div>
<div class="a" style="left:144.8px;top:251.2px;width:3.4px;height:3.4px;background:#d32222;border-radius:1.7px;"></div>
<span class="t" id="t61" style="left:145.3px;top:262.01px;font-size:39.5px;color:#ffffff;-webkit-text-stroke:0.7px #262626;transform:scaleX(0.8200);">ABC</span>
<span class="t" id="t62" style="left:222.29999999999998px;top:262.01px;font-size:39.5px;color:#ffffff;-webkit-text-stroke:0.7px #262626;transform:scaleX(0.9521);">Company:</span>
<span class="t" id="t63" style="left:402.1px;top:262.01px;font-size:39.5px;color:#ffffff;-webkit-text-stroke:0.7px #262626;transform:scaleX(0.9683);">Annual</span>
<span class="t" id="t64" style="left:527.6999999999999px;top:262.01px;font-size:39.5px;color:#ffffff;-webkit-text-stroke:0.7px #262626;transform:scaleX(0.9851);">Report</span>
<span class="t" id="t65" style="left:649.9000000000001px;top:262.01px;font-size:39.5px;color:#ffffff;-webkit-text-stroke:0.7px #262626;transform:scaleX(0.9559);">2024</span>
<span class="t" id="t66" style="left:145.6px;top:310.02px;font-size:15.2px;color:#adadad;-webkit-text-stroke:0.2px #adadad;letter-spacing:1.3283px;">A summary of our achievements, challenges, and future plans</span>
<div class="a" style="left:541.7px;top:324.3px;width:96.3px;height:1px;border-bottom:1px dotted #6b63d6;"></div>
<span class="t" id="t67" style="left:144.6px;top:353.01px;font-size:21.9px;color:#98b2ee;-webkit-text-stroke:0.4px #262626;transform:scaleX(1.0839);">Introduction</span>
<span class="t" id="t68" style="left:145.3px;top:382.01px;font-size:16.4px;color:#f6f6f6;-webkit-text-stroke:0.18px #f6f6f6;transform:scaleX(0.9586);">Welcome to the annual report of ABC Company, a leading provider of innovative solutions for various</span>
<span class="t" id="t69" style="left:145.3px;top:404.01px;font-size:16.4px;color:#f6f6f6;-webkit-text-stroke:0.18px #f6f6f6;transform:scaleX(0.9575);">industries. We are proud to share with you our accomplishments, challenges, and future plans for the</span>
<span class="t" id="t70" style="left:145.3px;top:427.01px;font-size:16.4px;color:#f6f6f6;-webkit-text-stroke:0.18px #f6f6f6;transform:scaleX(0.9458);">year 2024, which was a remarkable year for us despite the unprecedented global crisis caused by the</span>
<span class="t" id="t71" style="left:145.3px;top:449.01px;font-size:16.4px;color:#f6f6f6;-webkit-text-stroke:0.18px #f6f6f6;transform:scaleX(0.9115);">COVID-24 pandemic.</span>
<span class="t" id="t72" style="left:145.3px;top:484.01px;font-size:16.4px;color:#f6f6f6;-webkit-text-stroke:0.18px #f6f6f6;transform:scaleX(0.9619);">In this report, you will find an overview of our organizational structure, policy updates, contracts, HR</span>
<span class="t" id="t73" style="left:145.3px;top:506.01px;font-size:16.4px;color:#f6f6f6;-webkit-text-stroke:0.18px #f6f6f6;transform:scaleX(0.9496);">policies, crucial financial data such as revenue and profits, healthcare forms, employee contracts, and</span>
<span class="t" id="t74" style="left:145.3px;top:529.01px;font-size:16.4px;color:#f6f6f6;-webkit-text-stroke:0.18px #f6f6f6;transform:scaleX(0.9732);">other relevant information. We hope that this report will give you a clear picture of our performance,</span>
<span class="t" id="t75" style="left:145.3px;top:551.01px;font-size:16.4px;color:#f6f6f6;-webkit-text-stroke:0.18px #f6f6f6;transform:scaleX(0.9324);">values, and vision as a company.</span>
<div class="a" style="left:712px;top:420.2px;width:83px;height:1px;border-bottom:1px dotted #6b63d6;"></div>
<div class="a" style="left:34px;top:142px;width:945px;height:449px;overflow:hidden">
<span class="wm" style="left:-303.8px;top:481.9px;font-size:10.6px;color:rgba(212,212,212,0.6);transform-origin:0 8.97px;transform:rotate(-30deg) scaleX(1.2040)">Confidential / tatu@Seppala365Dev.onmicrosoft.com</span>
<span class="wm" style="left:-250.7px;top:574.0px;font-size:10.6px;color:rgba(212,212,212,0.6);transform-origin:0 8.97px;transform:rotate(-30deg) scaleX(1.2040)">Confidential / tatu@Seppala365Dev.onmicrosoft.com</span>
<span class="wm" style="left:-343.5px;top:75.2px;font-size:10.6px;color:rgba(212,212,212,0.6);transform-origin:0 8.97px;transform:rotate(-30deg) scaleX(1.2040)">Confidential / tatu@Seppala365Dev.onmicrosoft.com</span>
<span class="wm" style="left:-290.4px;top:167.3px;font-size:10.6px;color:rgba(212,212,212,0.6);transform-origin:0 8.97px;transform:rotate(-30deg) scaleX(1.2040)">Confidential / tatu@Seppala365Dev.onmicrosoft.com</span>
<span class="wm" style="left:-237.2px;top:259.3px;font-size:10.6px;color:rgba(212,212,212,0.6);transform-origin:0 8.97px;transform:rotate(-30deg) scaleX(1.2040)">Confidential / tatu@Seppala365Dev.onmicrosoft.com</span>
<span class="wm" style="left:-184.1px;top:351.4px;font-size:10.6px;color:rgba(212,212,212,0.6);transform-origin:0 8.97px;transform:rotate(-30deg) scaleX(1.2040)">Confidential / tatu@Seppala365Dev.onmicrosoft.com</span>
<span class="wm" style="left:-130.9px;top:443.4px;font-size:10.6px;color:rgba(212,212,212,0.6);transform-origin:0 8.97px;transform:rotate(-30deg) scaleX(1.2040)">Confidential / tatu@Seppala365Dev.onmicrosoft.com</span>
<span class="wm" style="left:-77.8px;top:535.5px;font-size:10.6px;color:rgba(212,212,212,0.6);transform-origin:0 8.97px;transform:rotate(-30deg) scaleX(1.2040)">Confidential / tatu@Seppala365Dev.onmicrosoft.com</span>
<span class="wm" style="left:-24.6px;top:627.6px;font-size:10.6px;color:rgba(212,212,212,0.6);transform-origin:0 8.97px;transform:rotate(-30deg) scaleX(1.2040)">Confidential / tatu@Seppala365Dev.onmicrosoft.com</span>
<span class="wm" style="left:-170.6px;top:36.7px;font-size:10.6px;color:rgba(212,212,212,0.6);transform-origin:0 8.97px;transform:rotate(-30deg) scaleX(1.2040)">Confidential / tatu@Seppala365Dev.onmicrosoft.com</span>
<span class="wm" style="left:-117.5px;top:128.8px;font-size:10.6px;color:rgba(212,212,212,0.6);transform-origin:0 8.97px;transform:rotate(-30deg) scaleX(1.2040)">Confidential / tatu@Seppala365Dev.onmicrosoft.com</span>
<span class="wm" style="left:-64.3px;top:220.8px;font-size:10.6px;color:rgba(212,212,212,0.6);transform-origin:0 8.97px;transform:rotate(-30deg) scaleX(1.2040)">Confidential / tatu@Seppala365Dev.onmicrosoft.com</span>
<span class="wm" style="left:-11.2px;top:312.9px;font-size:10.6px;color:rgba(212,212,212,0.6);transform-origin:0 8.97px;transform:rotate(-30deg) scaleX(1.2040)">Confidential / tatu@Seppala365Dev.onmicrosoft.com</span>
<span class="wm" style="left:42.0px;top:404.9px;font-size:10.6px;color:rgba(212,212,212,0.6);transform-origin:0 8.97px;transform:rotate(-30deg) scaleX(1.2040)">Confidential / tatu@Seppala365Dev.onmicrosoft.com</span>
<span class="wm" style="left:95.1px;top:497.0px;font-size:10.6px;color:rgba(212,212,212,0.6);transform-origin:0 8.97px;transform:rotate(-30deg) scaleX(1.2040)">Confidential / tatu@Seppala365Dev.onmicrosoft.com</span>
<span class="wm" style="left:148.3px;top:589.1px;font-size:10.6px;color:rgba(212,212,212,0.6);transform-origin:0 8.97px;transform:rotate(-30deg) scaleX(1.2040)">Confidential / tatu@Seppala365Dev.onmicrosoft.com</span>
<span class="wm" style="left:2.3px;top:-1.8px;font-size:10.6px;color:rgba(212,212,212,0.6);transform-origin:0 8.97px;transform:rotate(-30deg) scaleX(1.2040)">Confidential / tatu@Seppala365Dev.onmicrosoft.com</span>
<span class="wm" style="left:55.4px;top:90.3px;font-size:10.6px;color:rgba(212,212,212,0.6);transform-origin:0 8.97px;transform:rotate(-30deg) scaleX(1.2040)">Confidential / tatu@Seppala365Dev.onmicrosoft.com</span>
<span class="wm" style="left:108.6px;top:182.3px;font-size:10.6px;color:rgba(212,212,212,0.6);transform-origin:0 8.97px;transform:rotate(-30deg) scaleX(1.2040)">Confidential / tatu@Seppala365Dev.onmicrosoft.com</span>
<span class="wm" style="left:161.7px;top:274.4px;font-size:10.6px;color:rgba(212,212,212,0.6);transform-origin:0 8.97px;transform:rotate(-30deg) scaleX(1.2040)">Confidential / tatu@Seppala365Dev.onmicrosoft.com</span>
<span class="wm" style="left:214.9px;top:366.4px;font-size:10.6px;color:rgba(212,212,212,0.6);transform-origin:0 8.97px;transform:rotate(-30deg) scaleX(1.2040)">Confidential / tatu@Seppala365Dev.onmicrosoft.com</span>
<span class="wm" style="left:268.0px;top:458.5px;font-size:10.6px;color:rgba(212,212,212,0.6);transform-origin:0 8.97px;transform:rotate(-30deg) scaleX(1.2040)">Confidential / tatu@Seppala365Dev.onmicrosoft.com</span>
<span class="wm" style="left:321.2px;top:550.6px;font-size:10.6px;color:rgba(212,212,212,0.6);transform-origin:0 8.97px;transform:rotate(-30deg) scaleX(1.2040)">Confidential / tatu@Seppala365Dev.onmicrosoft.com</span>
<span class="wm" style="left:374.3px;top:642.6px;font-size:10.6px;color:rgba(212,212,212,0.6);transform-origin:0 8.97px;transform:rotate(-30deg) scaleX(1.2040)">Confidential / tatu@Seppala365Dev.onmicrosoft.com</span>
<span class="wm" style="left:175.2px;top:-40.3px;font-size:10.6px;color:rgba(212,212,212,0.6);transform-origin:0 8.97px;transform:rotate(-30deg) scaleX(1.2040)">Confidential / tatu@Seppala365Dev.onmicrosoft.com</span>
<span class="wm" style="left:228.3px;top:51.8px;font-size:10.6px;color:rgba(212,212,212,0.6);transform-origin:0 8.97px;transform:rotate(-30deg) scaleX(1.2040)">Confidential / tatu@Seppala365Dev.onmicrosoft.com</span>
<span class="wm" style="left:281.5px;top:143.8px;font-size:10.6px;color:rgba(212,212,212,0.6);transform-origin:0 8.97px;transform:rotate(-30deg) scaleX(1.2040)">Confidential / tatu@Seppala365Dev.onmicrosoft.com</span>
<span class="wm" style="left:334.6px;top:235.9px;font-size:10.6px;color:rgba(212,212,212,0.6);transform-origin:0 8.97px;transform:rotate(-30deg) scaleX(1.2040)">Confidential / tatu@Seppala365Dev.onmicrosoft.com</span>
<span class="wm" style="left:387.8px;top:327.9px;font-size:10.6px;color:rgba(212,212,212,0.6);transform-origin:0 8.97px;transform:rotate(-30deg) scaleX(1.2040)">Confidential / tatu@Seppala365Dev.onmicrosoft.com</span>
<span class="wm" style="left:440.9px;top:420.0px;font-size:10.6px;color:rgba(212,212,212,0.6);transform-origin:0 8.97px;transform:rotate(-30deg) scaleX(1.2040)">Confidential / tatu@Seppala365Dev.onmicrosoft.com</span>
<span class="wm" style="left:494.1px;top:512.1px;font-size:10.6px;color:rgba(212,212,212,0.6);transform-origin:0 8.97px;transform:rotate(-30deg) scaleX(1.2040)">Confidential / tatu@Seppala365Dev.onmicrosoft.com</span>
<span class="wm" style="left:547.2px;top:604.1px;font-size:10.6px;color:rgba(212,212,212,0.6);transform-origin:0 8.97px;transform:rotate(-30deg) scaleX(1.2040)">Confidential / tatu@Seppala365Dev.onmicrosoft.com</span>
<span class="wm" style="left:401.2px;top:13.3px;font-size:10.6px;color:rgba(212,212,212,0.6);transform-origin:0 8.97px;transform:rotate(-30deg) scaleX(1.2040)">Confidential / tatu@Seppala365Dev.onmicrosoft.com</span>
<span class="wm" style="left:454.4px;top:105.3px;font-size:10.6px;color:rgba(212,212,212,0.6);transform-origin:0 8.97px;transform:rotate(-30deg) scaleX(1.2040)">Confidential / tatu@Seppala365Dev.onmicrosoft.com</span>
<span class="wm" style="left:507.5px;top:197.4px;font-size:10.6px;color:rgba(212,212,212,0.6);transform-origin:0 8.97px;transform:rotate(-30deg) scaleX(1.2040)">Confidential / tatu@Seppala365Dev.onmicrosoft.com</span>
<span class="wm" style="left:560.7px;top:289.4px;font-size:10.6px;color:rgba(212,212,212,0.6);transform-origin:0 8.97px;transform:rotate(-30deg) scaleX(1.2040)">Confidential / tatu@Seppala365Dev.onmicrosoft.com</span>
<span class="wm" style="left:613.8px;top:381.5px;font-size:10.6px;color:rgba(212,212,212,0.6);transform-origin:0 8.97px;transform:rotate(-30deg) scaleX(1.2040)">Confidential / tatu@Seppala365Dev.onmicrosoft.com</span>
<span class="wm" style="left:667.0px;top:473.6px;font-size:10.6px;color:rgba(212,212,212,0.6);transform-origin:0 8.97px;transform:rotate(-30deg) scaleX(1.2040)">Confidential / tatu@Seppala365Dev.onmicrosoft.com</span>
<span class="wm" style="left:720.1px;top:565.6px;font-size:10.6px;color:rgba(212,212,212,0.6);transform-origin:0 8.97px;transform:rotate(-30deg) scaleX(1.2040)">Confidential / tatu@Seppala365Dev.onmicrosoft.com</span>
<span class="wm" style="left:574.1px;top:-25.2px;font-size:10.6px;color:rgba(212,212,212,0.6);transform-origin:0 8.97px;transform:rotate(-30deg) scaleX(1.2040)">Confidential / tatu@Seppala365Dev.onmicrosoft.com</span>
<span class="wm" style="left:627.3px;top:66.8px;font-size:10.6px;color:rgba(212,212,212,0.6);transform-origin:0 8.97px;transform:rotate(-30deg) scaleX(1.2040)">Confidential / tatu@Seppala365Dev.onmicrosoft.com</span>
<span class="wm" style="left:680.4px;top:158.9px;font-size:10.6px;color:rgba(212,212,212,0.6);transform-origin:0 8.97px;transform:rotate(-30deg) scaleX(1.2040)">Confidential / tatu@Seppala365Dev.onmicrosoft.com</span>
<span class="wm" style="left:733.6px;top:250.9px;font-size:10.6px;color:rgba(212,212,212,0.6);transform-origin:0 8.97px;transform:rotate(-30deg) scaleX(1.2040)">Confidential / tatu@Seppala365Dev.onmicrosoft.com</span>
<span class="wm" style="left:786.7px;top:343.0px;font-size:10.6px;color:rgba(212,212,212,0.6);transform-origin:0 8.97px;transform:rotate(-30deg) scaleX(1.2040)">Confidential / tatu@Seppala365Dev.onmicrosoft.com</span>
<span class="wm" style="left:839.9px;top:435.1px;font-size:10.6px;color:rgba(212,212,212,0.6);transform-origin:0 8.97px;transform:rotate(-30deg) scaleX(1.2040)">Confidential / tatu@Seppala365Dev.onmicrosoft.com</span>
<span class="wm" style="left:893.0px;top:527.1px;font-size:10.6px;color:rgba(212,212,212,0.6);transform-origin:0 8.97px;transform:rotate(-30deg) scaleX(1.2040)">Confidential / tatu@Seppala365Dev.onmicrosoft.com</span>
<span class="wm" style="left:946.2px;top:619.2px;font-size:10.6px;color:rgba(212,212,212,0.6);transform-origin:0 8.97px;transform:rotate(-30deg) scaleX(1.2040)">Confidential / tatu@Seppala365Dev.onmicrosoft.com</span>
<span class="wm" style="left:800.2px;top:28.3px;font-size:10.6px;color:rgba(212,212,212,0.6);transform-origin:0 8.97px;transform:rotate(-30deg) scaleX(1.2040)">Confidential / tatu@Seppala365Dev.onmicrosoft.com</span>
<span class="wm" style="left:853.3px;top:120.4px;font-size:10.6px;color:rgba(212,212,212,0.6);transform-origin:0 8.97px;transform:rotate(-30deg) scaleX(1.2040)">Confidential / tatu@Seppala365Dev.onmicrosoft.com</span>
<span class="wm" style="left:906.5px;top:212.4px;font-size:10.6px;color:rgba(212,212,212,0.6);transform-origin:0 8.97px;transform:rotate(-30deg) scaleX(1.2040)">Confidential / tatu@Seppala365Dev.onmicrosoft.com</span>
<span class="wm" style="left:959.6px;top:304.5px;font-size:10.6px;color:rgba(212,212,212,0.6);transform-origin:0 8.97px;transform:rotate(-30deg) scaleX(1.2040)">Confidential / tatu@Seppala365Dev.onmicrosoft.com</span>
<span class="wm" style="left:973.1px;top:-10.2px;font-size:10.6px;color:rgba(212,212,212,0.6);transform-origin:0 8.97px;transform:rotate(-30deg) scaleX(1.2040)">Confidential / tatu@Seppala365Dev.onmicrosoft.com</span>
</div>
<svg class="a" style="left:1016px;top:125px;" width="6.4" height="5" viewBox="0 0 6.4 5"><path d="M0.2 4.8 L3.2 0.4 L6.2 4.8Z" fill="#9a9a9a"/></svg>
<div class="a" style="left:1016.4px;top:132.8px;width:5.8px;height:34.5px;background:#9a9a9a;border-radius:2.9px;"></div>
</div>
</body></html>
